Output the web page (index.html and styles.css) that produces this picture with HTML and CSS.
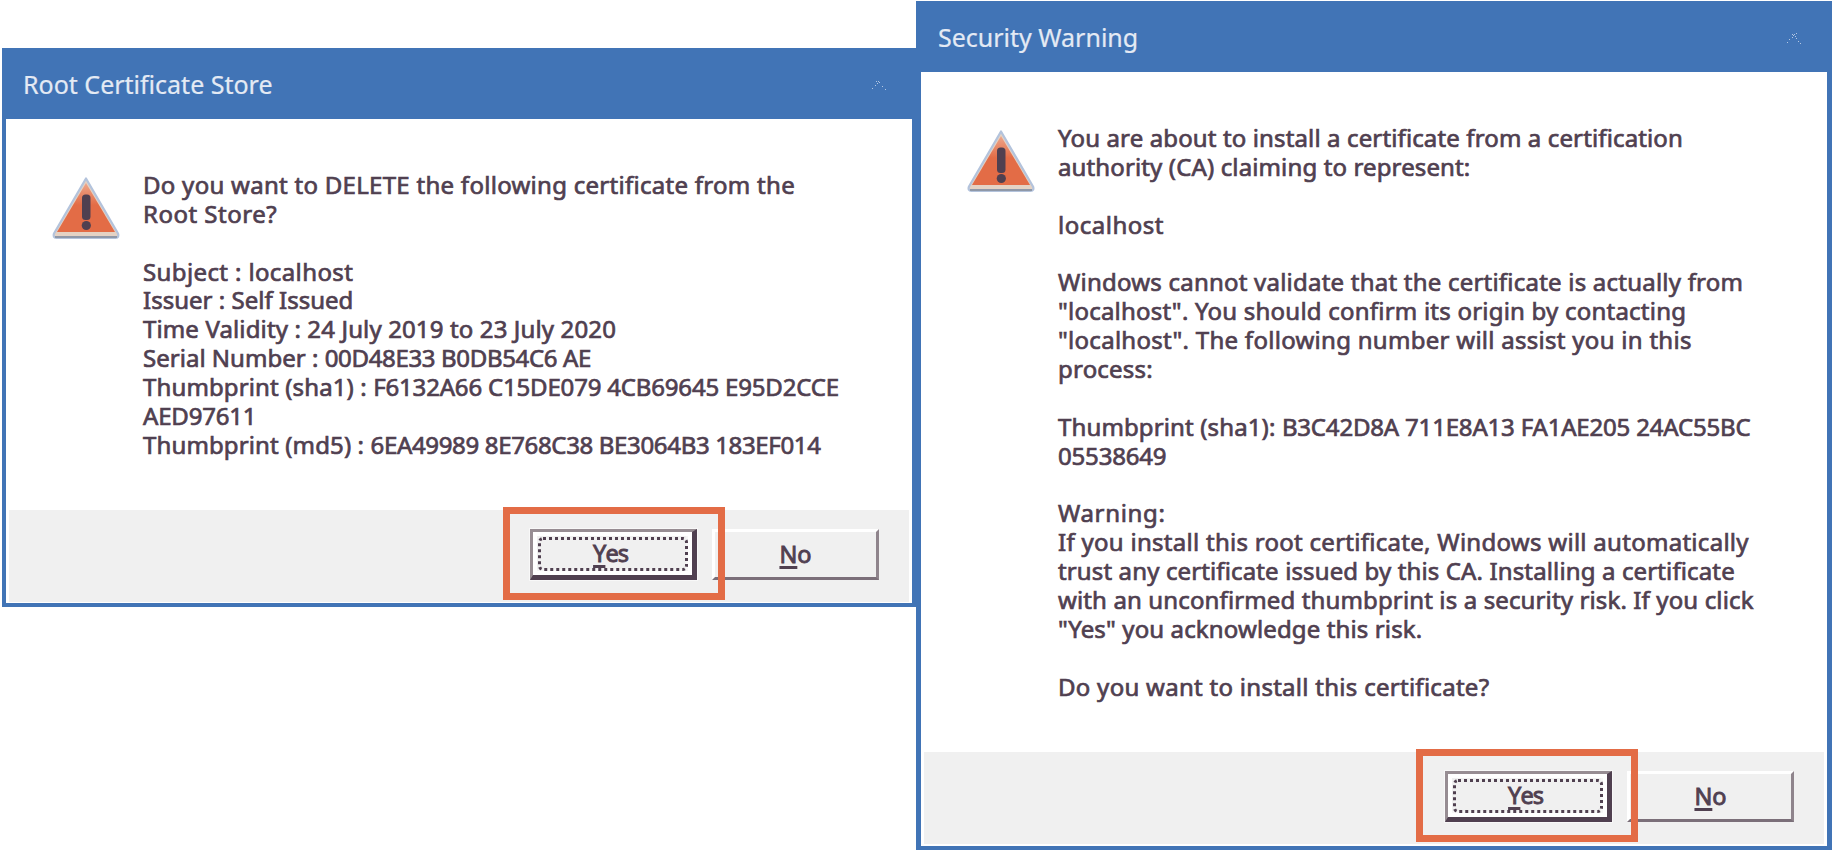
FILE: index.html
```
<!DOCTYPE html>
<html lang="en">
<head>
<meta charset="utf-8">
<title>Certificate dialogs</title>
<link rel="stylesheet" href="styles.css">
</head>
<body>
<svg width="0" height="0" class="defs" aria-hidden="true">
  <defs>
    <linearGradient id="shine" x1="0" y1="0" x2="0" y2="1">
      <stop offset="0" stop-color="#eea68a"/>
      <stop offset=".45" stop-color="#e36c46"/>
    </linearGradient>
    <symbol id="warn" viewBox="0 0 70 64">
      <path d="M35 2.500L67 57.500q1.500 4-2.500 4.500h-59q-4-.5-2.500-4.500Z" fill="#e4d2c4" stroke="#b3c3dc" stroke-width="2.200" stroke-linejoin="round"/>
      <path d="M4 61h62" stroke="#8f98a8" stroke-width="2"/>
      <path d="M35 7L64 56H6Z" fill="url(#shine)"/>
      <rect x="31" y="18.500" width="8.500" height="25.500" rx="3.500" fill="#504050"/>
      <circle cx="35.300" cy="49.500" r="4.600" fill="#504050"/>
    </symbol>
  </defs>
</svg>

<section class="window window-root">
  <header class="titlebar">
    <h1>Root Certificate Store</h1>
    <svg class="caret" viewBox="0 0 14 10" shape-rendering="crispEdges"><path d="M0 7h1v1h-1zM3 4h1v1h-1zM5 2h1v1h-1zM4 0h1v1h-1zM6 0h1v1h-1zM7 1h1v1h-1zM10 5h1v1h-1zM13 8h1v1h-1z"/></svg>
  </header>
  <div class="content">
    <svg class="icon"><use href="#warn"/></svg>
    <div class="message">
      <p><span class="line w3">Do you want to DELETE the following certificate from the</span><span class="line w5">Root Store?</span></p>
      <p><span class="line w4">Subject : localhost</span><span class="line w0">Issuer : Self Issued</span><span class="line w1">Time Validity : 24 July 2019 to 23 July 2020</span><span class="line w0">Serial Number : <span class="hex">00D48E33 B0DB54C6 AE</span></span><span class="line w1">Thumbprint (sha1) : <span class="n2">F6132A66 C15DE079 4CB69645 E95D2CCE</span></span><span class="line n2">AED97611</span><span class="line w1">Thumbprint (md5) : <span class="hex">6EA49989 8E768C38 BE3064B3 183EF014</span></span></p>
    </div>
  </div>
  <footer class="actions">
    <div class="focus-wrap"><button class="btn btn-default"><span class="focus"><u>Y</u>es</span></button><i class="highlight"></i></div>
    <button class="btn"><span><u>N</u>o</span></button>
  </footer>
</section>

<section class="window window-security">
  <header class="titlebar">
    <h1>Security Warning</h1>
    <svg class="caret" viewBox="0 0 14 10" shape-rendering="crispEdges"><path d="M0 8h1v1h-1zM2 5h1v1h-1zM5 3h1v1h-1zM5 0h1v1h-1zM6 1h1v1h-1zM7 0h1v1h-1zM9 -1h1v1h-1zM8 2h1v1h-1zM9 4h1v1h-1zM11 7h1v1h-1zM13 9h1v1h-1z"/></svg>
  </header>
  <div class="content">
    <svg class="icon"><use href="#warn"/></svg>
    <div class="message">
      <p><span class="line w1">You are about to install a certificate from a certification</span><span class="line w1">authority (CA) claiming to represent:</span></p>
      <p><span class="line w5">localhost</span></p>
      <p><span class="line w2">Windows cannot validate that the certificate is actually from</span><span class="line w2">"localhost". You should confirm its origin by contacting</span><span class="line w3">"localhost". The following number will assist you in this</span><span class="line w2">process:</span></p>
      <p><span class="line w1">Thumbprint (sha1): <span class="n2">B3C42D8A 711E8A13 FA1AE205 24AC55BC</span></span><span class="line n2">05538649</span></p>
      <p><span class="line w7">Warning:</span><span class="line w3">If you install this root certificate, Windows will automatically</span><span class="line w1">trust any certificate issued by this CA. Installing a certificate</span><span class="line w1">with an unconfirmed thumbprint is a security risk. If you click</span><span class="line w1">"Yes" you acknowledge this risk.</span></p>
      <p><span class="line w3">Do you want to install this certificate?</span></p>
    </div>
  </div>
  <footer class="actions">
    <div class="focus-wrap"><button class="btn btn-default"><span class="focus"><u>Y</u>es</span></button><i class="highlight"></i></div>
    <button class="btn"><span><u>N</u>o</span></button>
  </footer>
</section>
</body>
</html>
```
FILE: styles.css
```
* { box-sizing: border-box; }

body {
  position: relative;
  margin: 0;
  width: 1833px;
  height: 851px;
  overflow: hidden;
  background: #fff;
  color: #504050;
  font-family: "Noto Sans", "Open Sans", sans-serif;
  font-size: 24px;
}

.defs { position: absolute; }

/* Dialog windows placed on the desktop */
.window {
  position: absolute;
  display: flex;
  flex-direction: column;
  width: 915px;
  background: #fff;
  border: solid #4174b6;
  border-width: 0 5px 4px 4px;
}
.window-root { left: 2px; top: 48px; height: 559px; }
.window-security { left: 916px; top: 1px; width: 916px; height: 849px; border-left-width: 5px; }

.titlebar {
  display: flex;
  align-items: center;
  justify-content: space-between;
  flex: none;
  height: 71px;
  margin: 0 -5px 0 -4px;
  padding: 0 31px 0 21px;
  background: #4174b6;
}
.window-security .titlebar { margin-left: -5px; padding-left: 22px; }
.titlebar h1 {
  margin: 0;
  color: #e4eaf4;
  font-size: 25px;
  font-weight: 400;
  line-height: 34px;
  padding-top: 1px;
  -webkit-text-stroke: .2px #e4eaf4;
}
.caret { width: 14px; height: 10px; margin-top: 5px; fill: #b3c7e2; overflow: visible; }

.content {
  display: flex;
  flex: 1;
  align-items: flex-start;
  padding: 52px 0 0 45px;
}
.icon { flex: none; width: 70px; height: 64px; margin: 5px 22px 0 0; }
.message {
  line-height: 28.87px;
  white-space: nowrap;
  -webkit-text-stroke: .7px #504050;
}
.message p { margin: 0 0 28.87px; }
.line { display: block; }

/* Tracking steps for message lines */
.hex { letter-spacing: -.34px; }
.n2 { letter-spacing: -.18px; }
.w0 { letter-spacing: .02px; }
.w1 { letter-spacing: .13px; }
.w2 { letter-spacing: .22px; }
.w3 { letter-spacing: .28px; }
.w4 { letter-spacing: .38px; }
.w5 { letter-spacing: .5px; }
.w7 { letter-spacing: .65px; }

.actions {
  display: flex;
  flex: none;
  justify-content: flex-end;
  align-items: flex-start;
  gap: 15px;
  height: 92px;
  margin: 0 3px 2px;
  padding: 19px 30px 0 0;
  background: #f0f0f0;
}
.window-root .actions { margin-bottom: 1px; }
.focus-wrap { position: relative; z-index: 1; }

.btn {
  display: flex;
  align-items: center;
  justify-content: center;
  width: 167px;
  height: 51px;
  margin: 0;
  padding: 0 0 1px;
  border: solid;
  border-width: 3px;
  border-color: #fff #8f848c #7b6f79 #fff;
  background: #f0f0f0;
  color: #504050;
  font: 400 23.500px/30px "Noto Sans", "Open Sans", sans-serif;
  -webkit-text-stroke: .9px #504050;
}
.btn u {
  text-decoration-thickness: 3px;
  text-underline-offset: 3px;
  text-decoration-skip-ink: none;
}
.btn-default {
  padding: 0;
  border-width: 3px 5px 5px 3px;
  border-color: #978d93 #504050 #504050 #978d93;
  box-shadow: inset 0 0 0 4px #fff, inset -1px -1px 0 5px #f6f6f6, 0 0 0 1px #f8f8f8;
}
.focus {
  display: flex;
  align-items: center;
  justify-content: center;
  width: 150px;
  height: 34px;
  padding: 0 4px 1px 0;
  border: 3px dotted #504050;
  border-radius: 5px;
  letter-spacing: -1px;
}

.highlight {
  position: absolute;
  left: -27px;
  top: -22px;
  width: 222px;
  height: 93px;
  border: 7px solid #e36c46;
}
.window-security .highlight { left: -29px; }
```
